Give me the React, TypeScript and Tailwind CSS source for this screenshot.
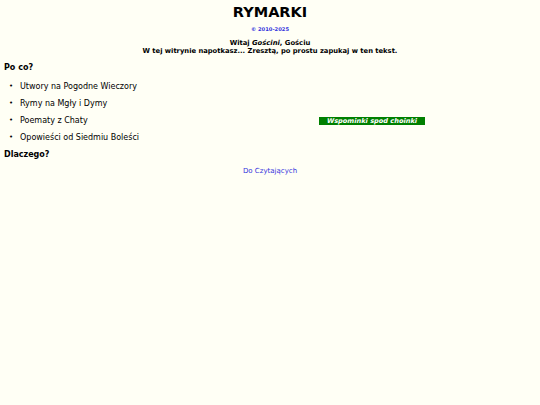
import React from "react";

export default function App() {
  const items = [
    "Utwory na Pogodne Wieczory",
    "Rymy na Mgły i Dymy",
    "Poematy z Chaty",
    "Opowieści od Siedmiu Boleści",
  ];
  return (
    <div className="min-h-[405px] bg-[#fffff5] text-black font-['DejaVu_Sans',Verdana,sans-serif]">
      <div className="pt-[3px] text-center">
        <h1 className="text-[14.5px] font-bold leading-[18px]">RYMARKI</h1>
        <div className="mt-[4px] text-[5.2px] leading-[8px] font-bold text-[#3333dd]">© 2010-2025</div>
        <div className="mt-[6px] text-[6.8px] font-bold leading-[8px]">
          Witaj <i>Gościni</i>, Gościu
        </div>
        <div className="text-[6.75px] font-bold leading-[8px]">
          W tej witrynie napotkasz... Zresztą, po prostu zapukaj w ten tekst.
        </div>
      </div>
      <h2 className="mt-[7px] pl-[4px] text-[8px] font-bold leading-[12px]">Po co?</h2>
      <ul className="mt-[4px] text-[8px] leading-[11px]">
        {items.map((t, i) => (
          <li key={t} className="flex items-center h-[17px]">
            <span className="w-[20px] pl-[9px] text-[7px]">•</span>
            <span className="w-[299px]">{t}</span>
            {i === 2 && (
              <span className="bg-[#008000] text-white italic font-bold text-[6.6px] leading-[8px] w-[106px] text-center">
                Wspominki spod choinki
              </span>
            )}
          </li>
        ))}
      </ul>
      <h2 className="mt-[3px] pl-[4px] text-[8px] font-bold leading-[12px]">Dlaczego?</h2>
      <div className="mt-[6px] text-center text-[7px] leading-[9px] text-[#3333dd]">Do Czytających</div>
    </div>
  );
}
